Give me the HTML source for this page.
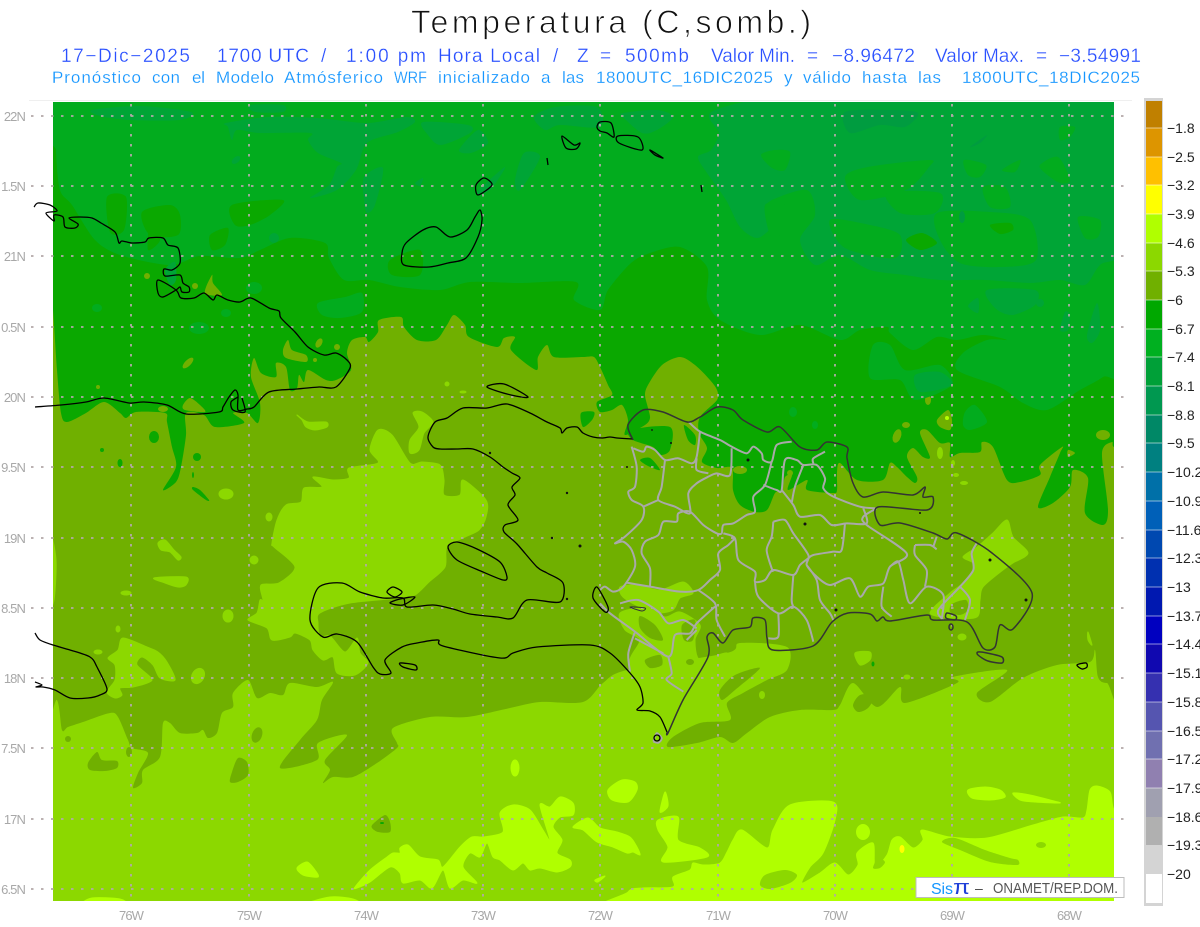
<!DOCTYPE html>
<html lang="es"><head><meta charset="utf-8"><title>Temperatura (C,somb.)</title>
<style>
html,body{margin:0;padding:0;background:#fff;width:1200px;height:927px;overflow:hidden}
svg{display:block;font-family:"Liberation Sans",sans-serif}
.l2{font-size:19px;fill:#2a50ff;stroke:#fff;stroke-width:.25}
.l3{font-size:17px;fill:#1596ff;stroke:#fff;stroke-width:.2}
.ax{font-size:13px;fill:#a8a8a8;letter-spacing:-.9px}
.lg{font-size:14px;fill:#222}
.c{fill:none;stroke:#000;stroke-width:1.3;stroke-linejoin:round}
.d{fill:none;stroke:#333;stroke-width:1.5;stroke-linejoin:round}
.g{fill:none;stroke:#a9a9a9;stroke-width:6;stroke-linejoin:round}
</style></head><body>
<svg width="1200" height="927" viewBox="0 0 1200 927" xmlns="http://www.w3.org/2000/svg">
<rect width="1200" height="927" fill="#fff"/>
<line x1="29" y1="100.5" x2="1132" y2="100.5" stroke="#efefef"/>
<!-- MAP -->
<clipPath id="m"><rect x="53" y="102" width="1061" height="799"/></clipPath>
<g clip-path="url(#m)">
<rect x="53" y="102" width="1061" height="799" fill="#8cd800"/>
<!-- yellow green -->
<g fill="#b0ff00" stroke="#b0ff00" stroke-linejoin="round">
<polygon points="297,868 307,862 315,870 318,877 303,875"/>
<polygon points="355,887 370,870 387,857 393,853 400,853 400,848 408,845 420,857 438,860 443,867 460,847 472,837 483,837 503,832 500,813 513,805 530,810 543,830 550,840 540,805 550,807 560,797 573,803 573,815 560,817 553,827 562,840 557,853 570,860 570,867 557,872 540,868 530,870 523,863 513,870 500,860 493,857 487,843 480,857 470,853 463,867 477,883 463,880 450,888 443,870 432,888 420,880 403,883 400,873 390,867 370,882 357,888"/>
<polygon points="573,827 588,818 600,828 617,832 630,837 637,847 640,855 633,852 627,853 613,847 597,842 583,830"/>
<polygon points="608,790 622,780 635,782 637,790 628,802 612,800"/>
<ellipse cx="515" cy="768" rx="4" ry="8"/>
<polygon points="658,820 678,817 678,840 700,848 707,857 663,862 668,847 658,830"/>
<polygon points="628,892 643,888 673,887 673,877 690,870 693,863 703,865 720,863 727,852 733,840 742,830 767,848 773,830 790,805 833,802 835,820 823,853 810,867 802,883 820,873 835,863 848,875 858,865 857,853 873,843 875,867 887,855 892,840 900,837 913,848 923,840 922,830 950,837 987,838 1033,825 1063,817 1083,818 1087,810 1090,790 1097,786 1110,792 1114,810 1130,830 1130,920 620,920"/>
<polygon points="968,790 985,787 1000,790 1005,797 990,800 972,798"/>
<polygon points="1013,793 1030,795 1050,800 1060,803 1035,802 1020,800"/>
<polygon points="83,905 92,898 120,899 125,905"/><polygon points="305,905 330,897 353,899 358,905"/>
<polygon points="595,880 605,876 598,882"/><polygon points="665,792 668,806 660,812"/>
</g>
<g fill="#8cd800">
<polygon points="942,842 955,838 985,850 1010,858 1018,860 1017,865 990,862 960,850"/>
<polygon points="760,885 765,875 785,870 797,875 790,883 770,889"/>
<ellipse cx="1041" cy="845" rx="5" ry="3"/>
<polygon points="878,858 885,862 880,868 873,868"/>
</g>
<ellipse cx="863" cy="832" rx="7" ry="8" fill="#b0ff00"/>
<ellipse cx="902" cy="849" rx="2.5" ry="4" fill="#ffff00"/>
<!-- olive main -->
<polygon fill="#70b000" points="40,90 1130,90 1130,678 1107,683 1098,677 1095,650 1090,662 1057,665 1023,678 990,702 977,693 1007,670 953,677 957,683 905,703 900,687 877,707 853,683 840,705 833,710 800,710 770,717 747,733 733,743 720,737 697,743 668,747 673,737 700,723 730,720 727,703 743,693 767,680 787,670 787,647 740,643 727,653 627,670 603,683 583,702 540,702 510,708 467,717 430,717 393,728 397,743 397,748 377,763 353,777 333,777 323,783 330,770 325,760 347,735 318,743 317,760 280,768 300,740 317,720 322,700 333,682 317,687 290,683 283,695 270,693 257,698 248,680 233,693 233,707 222,713 217,733 208,738 203,730 197,733 180,733 170,723 163,723 160,757 143,770 142,783 133,788 138,773 148,753 132,748 128,740 118,717 110,713 83,722 68,727 62,730 57,700 40,690"/>
<!-- light patches on olive -->
<g fill="#8cd800" stroke="#8cd800" stroke-linejoin="round">
<polygon points="272,543 277,520 286,505 301,502 304,488 322,487 313,477 333,480 349,478 349,468 378,463 370,450 378,430 392,435 410,463 422,462 440,465 444,480 444,495 460,495 463,480 486,500 486,517 479,530 465,537 447,547 445,567 429,582 415,595 400,598 350,603 320,613 318,623 320,637 330,636 345,652 357,638 360,653 368,663 355,675 337,673 333,657 323,660 313,650 310,640 295,633 290,637 272,640 267,628 248,620 257,613 260,600 263,600 261,585 279,583 295,567 274,547"/>
<polygon points="108,658 118,650 123,638 147,647 158,652 167,662 175,680 160,678 153,665 142,657 137,665 152,680 133,687 120,688 122,695 115,698 107,692 115,680 115,665"/>
<ellipse cx="198" cy="676" rx="6" ry="8" transform="rotate(30 198 676)"/><ellipse cx="228" cy="616" rx="5" ry="6"/><ellipse cx="118" cy="629" rx="2" ry="3"/><ellipse cx="98" cy="652" rx="4" ry="2"/>
<ellipse cx="226" cy="494" rx="7" ry="5"/><ellipse cx="269" cy="517" rx="3" ry="4"/><ellipse cx="254" cy="560" rx="4" ry="4"/>
<polygon points="158,543 165,540 174,550 181,557 178,560 170,552 161,550"/>
<polygon points="154,578 186,577 186,585 178,587 165,583"/><ellipse cx="126" cy="593" rx="5" ry="2"/>
<polygon points="297,415 308,422 326,422 327,427 315,430 306,427 302,420"/>
<polygon points="413,413 422,412 433,422 424,433 419,450 410,453 410,440 419,427"/>
<ellipse cx="447" cy="384" rx="2" ry="2"/><ellipse cx="463" cy="392" rx="3" ry="1"/>
<polygon points="1007,520 1013,537 1028,553 1013,563 1003,570 983,587 980,600 977,617 953,618 930,613 950,593 963,583 975,565 963,557 977,547 993,533"/>
<ellipse cx="962" cy="637" rx="4" ry="3"/><polygon points="855,653 870,652 870,660 860,665"/>
<polygon points="620,587 637,585 660,590 683,582 693,593 680,598 673,610 657,613 640,607 623,597"/>
<polygon points="620,613 645,608 665,617 680,612 700,625 695,640 700,660 727,653 727,670 640,680 630,660 640,640 625,630"/>
<ellipse cx="907" cy="677" rx="3" ry="2"/><polygon points="1088,632 1092,645 1088,640"/>
<polygon points="50,535 56,560 54,600 48,605"/>
</g>
<polygon fill="#70b000" points="640,616 655,625 663,640 650,638 640,628"/><polygon fill="#70b000" points="682,625 695,620 693,640 684,640"/>
<polygon fill="#70b000" points="645,660 660,655 662,665 650,668"/><ellipse cx="690" cy="662" rx="4" ry="3" fill="#70b000"/>
<polygon fill="#70b000" points="952,604 966,600 968,610 960,615 950,612"/><polygon fill="#70b000" points="700,645 712,640 716,650 704,656"/>
<ellipse cx="762" cy="695" rx="3" ry="4" fill="#8cd800"/>
<!-- olive pockets on light -->
<g fill="#70b000">
<polygon points="97,752 102,760 117,761 117,768 105,771 90,770 88,763"/>
<ellipse cx="129" cy="752" rx="3" ry="5"/><ellipse cx="68" cy="739" rx="3" ry="3"/>
<ellipse cx="257" cy="735" rx="5" ry="8" transform="rotate(20 257 735)"/>
<polygon points="238,758 247,762 248,775 238,782 230,782 232,772"/>
<polygon points="373,824 385,815 390,822 390,832 378,832 372,828"/>
<ellipse cx="384" cy="726" rx="3" ry="2"/>
<polygon points="853,705 860,695 875,695 868,708 858,712"/>
<polygon points="720,690 735,675 760,668 735,690 722,700"/>
</g>
<!-- dark green -->
<polygon fill="#0aa800" points="40,60 48,250 53,310 57,370 61,413 67,422 86,413 104,402 120,413 126,418 136,412 165,413 167,422 172,447 176,467 163,490 176,482 181,467 186,435 186,413 204,415 215,427 244,423 233,413 247,413 258,423 260,403 251,377 254,358 261,373 276,377 276,363 286,367 290,390 297,388 299,375 304,382 308,370 326,380 336,380 351,370 347,353 352,340 365,337 369,342 378,332 379,320 401,317 404,327 417,340 436,340 447,325 454,315 465,325 469,337 497,347 504,338 515,337 511,350 536,370 538,357 547,345 554,357 583,357 594,357 600,367 608,385 612,395 597,402 600,412 612,410 622,405 628,420 625,435 645,425 650,418 648,408 645,395 648,385 662,365 680,357 695,365 710,380 717,390 717,400 700,417 699,433 707,448 702,462 717,468 732,468 733,490 740,505 755,512 767,510 775,493 782,490 785,477 792,475 788,490 807,480 807,490 833,493 837,490 837,473 840,463 857,480 883,480 890,463 897,467 907,477 915,483 917,477 907,457 913,448 923,457 930,457 920,433 927,430 940,443 950,443 950,457 960,453 980,452 982,442 993,447 1007,480 1020,482 1040,475 1040,465 1062,447 1060,453 1050,477 1038,507 1053,503 1070,487 1073,470 1088,478 1085,513 1103,525 1108,510 1102,453 1112,442 1114,447 1130,447 1130,60"/>
<g fill="#0aa800">
<polygon points="630,430 670,427 670,450 660,455 653,447 633,440"/>
<polygon points="581,413 594,412 592,420 583,427"/>
<ellipse cx="154" cy="437" rx="5" ry="6"/><ellipse cx="102" cy="450" rx="2" ry="2"/><ellipse cx="120" cy="463" rx="2.5" ry="4"/><ellipse cx="197" cy="457" rx="4" ry="4"/><ellipse cx="193" cy="475" rx="1" ry="3"/>
<polygon points="193,487 200,490 209,500 206,500 193,490"/>
<polygon points="684,425 695,435 695,445 688,440"/><polygon points="640,460 650,458 660,470 648,466"/>
</g>
<ellipse cx="382" cy="823" rx="2" ry="1" fill="#0aa800"/><ellipse cx="873" cy="664" rx="1.5" ry="2.5" fill="#0aa800"/>
<!-- olive spots on green -->
<g fill="#70b000">
<ellipse cx="188" cy="363" rx="7" ry="3" transform="rotate(-45 188 363)"/><ellipse cx="98" cy="387" rx="2" ry="2"/>
<polygon points="283,350 288,340 292,350 306,355 306,362 286,358"/>
<ellipse cx="319" cy="343" rx="3" ry="5" transform="rotate(30 319 343)"/><ellipse cx="337" cy="347" rx="3" ry="3"/><ellipse cx="315" cy="360" rx="2" ry="2"/>
<polygon points="205,293 212,275 213,283 222,295"/>
<ellipse cx="147" cy="276" rx="3" ry="3"/><ellipse cx="245" cy="243" rx="3" ry="3"/><ellipse cx="137" cy="235" rx="2" ry="2"/><ellipse cx="195" cy="286" rx="3" ry="3"/>
<polygon points="183,405 190,398 200,405 205,412 185,410"/><ellipse cx="163" cy="409" rx="5" ry="3"/>
<ellipse cx="897" cy="436" rx="4" ry="7" transform="rotate(20 897 436)"/><ellipse cx="906" cy="425" rx="4" ry="3"/>
<polygon points="937,420 948,410 952,420 950,430 940,427"/><ellipse cx="928" cy="400" rx="3" ry="5"/>
<ellipse cx="1103" cy="435" rx="7" ry="5"/><polygon points="1068,450 1075,453 1068,457"/>
<ellipse cx="740" cy="470" rx="7" ry="4"/><ellipse cx="790" cy="473" rx="3" ry="3"/>
</g>
<ellipse cx="947" cy="418" rx="2" ry="2" fill="#b0ff00"/>
<g fill="#8cd800"><ellipse cx="940" cy="453" rx="3" ry="6"/><ellipse cx="953" cy="463" rx="2" ry="3"/><ellipse cx="956" cy="475" rx="3" ry="2"/><ellipse cx="964" cy="483" rx="4" ry="2"/></g>
<!-- mid green -->
<polygon fill="#02ac1e" points="56,80 56,150 60,190 72,205 95,240 120,255 170,265 200,256 240,258 260,250 290,238 325,243 329,258 344,280 369,280 400,287 440,290 470,282 520,283 576,282 574,300 600,310 608,290 631,263 650,253 680,247 707,267 707,300 720,320 760,335 800,325 840,340 860,330 887,327 890,333 913,350 937,337 957,340 983,335 1007,340 987,340 963,353 957,370 1000,387 1023,403 1047,410 1080,390 1103,377 1130,355 1130,80"/>
<g fill="#0aa800">
<polygon points="107,197 126,197 124,230 110,232"/>
<polygon points="142,212 170,205 180,215 178,235 150,235"/>
<polygon points="232,205 283,200 270,215 250,225 235,225"/>
<polygon points="210,235 228,228 225,245 212,250"/>
<polygon points="390,260 420,250 420,275 392,275"/>
<polygon points="150,225 160,240 148,250"/>
</g>
<g fill="#02ac1e">
<polygon points="318,303 345,297 362,293 362,312 340,318 322,315"/>
<ellipse cx="97" cy="308" rx="5" ry="4"/><ellipse cx="199" cy="328" rx="10" ry="6"/><ellipse cx="226" cy="313" rx="5" ry="4"/><ellipse cx="254" cy="288" rx="8" ry="6"/><ellipse cx="793" cy="412" rx="4" ry="5"/><ellipse cx="815" cy="425" rx="3" ry="4"/>
<polygon points="873,345 890,345 905,370 940,365 952,385 915,400 900,380 870,378"/>
<polygon points="963,425 965,412 975,405 987,422 970,430"/>
</g>
<!-- blue-green -->
<g fill="#00a536">
<polygon points="715,110 830,90 1130,80 1130,240 1100,265 1085,285 1060,280 1030,283 985,280 940,280 905,275 870,270 840,255 815,265 800,240 815,215 807,190 772,200 765,210 778,213 772,227 757,238 740,227 726,200 707,173 698,157 711,150 719,133"/>
<polygon points="92,110 140,106 191,112 180,120 130,120 100,116"/>
<polygon points="226,123 268,117 318,118 367,123 406,117 415,122 398,132 367,143 356,170 337,190 310,198 329,185 337,167 341,163 318,153 308,140 310,133 260,133 237,130 232,140 228,127"/>
<polygon points="423,122 468,125 470,133 441,145 428,135"/><polygon points="459,150 478,130 488,143 471,153"/>
<polygon points="534,117 555,107 597,107 600,127 560,125 545,130"/><polygon points="515,180 524,153 540,157 520,190"/>
<polygon points="364,177 383,168 375,205 367,213 364,200"/><polygon points="250,105 283,105 283,112 255,112"/>
<polygon points="476,193 505,167 490,190"/><polygon points="415,183 423,178 420,186"/>
<polygon points="623,113 657,110 673,117 657,130 642,133 623,117"/><ellipse cx="236" cy="160" rx="5" ry="3" transform="rotate(-40 236 160)"/>
<polygon points="987,290 1035,290 1035,305 1012,315 995,308"/><polygon points="968,306 978,298 978,313"/><polygon points="1060,330 1065,312 1070,315 1068,330"/>
<polygon points="1087,335 1097,303 1100,330 1092,343"/><polygon points="915,375 940,372 952,385 920,392"/>
<ellipse cx="1040" cy="303" rx="4" ry="4"/>
<polygon points="165,270 175,262 176,280 170,285"/><ellipse cx="274" cy="238" rx="5" ry="5"/>
</g>
<g fill="#02ac1e">
<polygon points="761,155 775,150 790,152 785,170 772,168"/>
<polygon points="845,177 868,167 929,160 929,167 906,190 860,200"/>
<polygon points="1060,127 1075,127 1070,137 1060,140"/>
<polygon points="964,160 986,165 980,177 968,175"/>
<polygon points="1002,170 1020,160 1015,172"/>
<polygon points="1040,165 1058,157 1070,180 1060,183 1045,173"/>
<polygon points="887,193 940,193 935,213 900,213"/>
<polygon points="937,213 990,212 1030,220 1036,260 1000,267 960,263 940,240"/>
<polygon points="983,187 1005,187 1010,207 990,207"/>
<polygon points="1078,217 1100,220 1098,237 1085,238"/>
<polygon points="765,205 785,205 780,235 770,235"/>
<polygon points="830,220 870,225 900,235 895,258 845,248"/>
</g>
<g fill="#0aa800"><polygon points="990,225 1010,223 1013,230 1000,234"/><polygon points="906,240 922,233 937,243 920,250"/></g>
<polygon points="845,112 890,110 918,113 905,127 880,125 850,133" fill="#009c40"/>
<polygon points="970,147 987,135 980,143" fill="#009c40"/><ellipse cx="962" cy="217" rx="3" ry="6" fill="#009c40"/>
</g>
<!-- grid -->
<g stroke="#b2a8a8" stroke-width="1.8" stroke-dasharray="2.5 7.5" fill="none">
<path d="M31 116H1130M31 186H1130M31 256H1130M31 327H1130M31 397H1130M31 467H1130M31 538H1130M31 608H1130M31 678H1130M31 748H1130M31 819H1130M31 889H1130"/>
<path d="M131 104V899M249 104V899M366 104V899M483 104V899M600 104V899M718 104V899M835 104V899M952 104V899M1069 104V899"/>
</g>
<!-- DR gray provinces (crop coords) -->
<g transform="translate(600 390) scale(.33333)">
<path class="g" d="M95 170L110 230L105 290L85 305L95 330L130 350L125 390L75 440L45 460L70 455L95 480L105 530L70 590L40 605L15 590L0 600
M100 175L130 185L140 170L165 180L195 210L235 205L275 220L290 200L300 125
M265 95L300 125L360 150L395 170L440 190L460 170L485 190L490 210L515 215L530 165L575 155
M195 210L185 290L175 330L225 350L270 370L265 310L290 280L325 260L350 250L390 255L395 175
M290 205L290 240L325 250
M515 215L495 285L460 320L465 365L440 375L400 400L370 405L365 430L350 430L310 405L270 365L235 370L230 395L190 395L175 435L135 455L125 490L150 535L150 590
M130 350L175 330
M490 285L530 300L545 300L555 210L590 210L610 225L650 225L675 265L670 295L700 320L780 350L830 355
M545 300L580 345L600 380L660 375L695 405L740 400L800 400L790 355
M610 225L585 290L575 340M640 220L640 205L675 185
M370 430L405 445L415 510L465 545L465 575L495 570L520 540L580 555L600 525L625 505L640 495L700 485L725 480L735 400
M520 395L555 390L580 430L625 495L620 525L650 560L690 585L750 565L780 620L805 590L850 580L870 530L920 490L800 405L790 380L830 355
M520 395L515 440L500 480L515 535L520 545
M405 445L385 465L355 490L360 540L330 570L295 600L240 605L150 590L80 578
M465 575L475 620L535 670L580 650L620 690L640 755
M580 555L575 630L580 650M535 670L535 740L505 745
M620 525L650 570L660 630L690 670L700 690
M850 590L845 650L875 680M870 530L895 515L910 570L930 640L980 590L1030 615L1025 690
M945 465L990 465L1010 478M945 465L945 495L980 540L975 590M1010 440L1000 470
M1130 460L1115 490L1120 540L1080 590L1015 660L1030 690M1080 590L1110 630L1095 690
M295 600L345 640L350 690L375 740M345 650L290 700L270 730L225 735L205 800L105 725L30 670L0 640
M290 720L260 750M60 640L115 630L175 665L205 700L250 690L290 715
M105 725L85 790L90 845M205 800L215 850L200 870L250 905M105 745L190 790
M160 1055L170 1030L185 1045L175 1058L160 1055"/>
</g>
<!-- coasts -->
<polyline class="c" points="34,207 38,203 50,205 57,211 46,213 54,221 54,215 63,217 65,227 75,228 78,224 69,218 80,217 92,218 101,223 115,232 119,243 122,241 132,243 145,242 149,238 163,238 168,245 178,248 180,263 172,270 164,269 165,276 180,275 183,283 189,287 189,292 182,292 180,287 176,290 163,297 158,293 158,280 176,290 181,298 194,298 204,293 213,300 217,295 228,300 240,302 251,298 269,308 279,311 281,318 295,332 308,347 324,355 336,353 347,360 350,368 336,387 319,387 297,389 269,392 254,407 247,409 238,410 238,395 235,390 229,397 223,407 219,412 186,414 167,405 144,402 129,403 104,398 86,402 61,405 35,407"/>
<polyline class="c" points="238,397 231,402 233,410 245,412 242,398"/>
<polygon class="c" points="402,253 406,243 423,230 436,227 450,237 467,230 475,217 480,210 482,220 478,237 466,258 448,263 429,267 404,265"/>
<polygon class="c" points="476,185 484,178 492,185 478,195"/>
<polygon class="c" points="562,136 574,145 580,143 576,149 566,148"/>
<path class="c" d="M547 158L548 165M701 185L702 192"/>
<polygon class="c" points="597,127 600,122 611,123 614,137 607,133 600,131"/>
<polygon class="c" points="618,136 638,137 642,150 619,143"/>
<polygon class="c" points="650,150 663,158 655,155"/>
<polyline class="c" points="633,439 617,438 610,437 602,438 593,437 583,433 577,427 567,428 562,433 560,428 547,422 530,413 507,404 487,408 463,408 447,418 435,422 428,437 433,447 440,449 457,449 473,449 490,457 503,467 512,473 520,478 512,487 515,495 508,505 518,520 505,525 504,532 517,544 537,567 547,573 563,583 560,602 527,600 513,618 497,617 470,614 453,609 433,605 407,607 403,598 383,598 360,592 342,583 318,588 310,620 323,637 337,634 357,642 373,667 380,674 391,673 385,660 402,647 417,643 438,640 443,646 500,658 513,653 537,647 590,645 610,653 630,673 640,687 643,703 637,710 650,711 660,717 667,732"/>
<polyline class="d" points="667,732 668,733 683,700 708,657 707,637 713,633 723,643 733,630 750,627 753,618 765,620 767,638 773,650 813,646 832,622 848,613 870,614 877,621 883,617 890,621 927,615 933,620 967,622 983,648 995,647 1000,625 1013,629 1032,593 992,553 957,533 947,539 933,533 900,523 880,525 878,507 927,510 933,497 923,497 925,487 913,495 883,492 863,497 853,483 847,458 847,447 827,442 817,450 800,447 780,427 767,432 743,420 733,410 717,407 700,417 687,422 663,412 643,410 628,425 633,440"/>
<polygon class="c" points="448,547 457,542 477,549 500,562 507,577 503,580 483,572 457,560"/>
<polygon class="c" points="487,387 504,384 528,397 511,395"/>
<polygon class="c" points="387,592 393,587 402,592 395,597"/>
<polygon class="c" points="403,605 415,597 400,599 390,603"/>
<polygon class="c" points="400,663 415,665 416,670 403,667"/>
<polyline class="c" points="35,633 40,640 53,645 70,650 90,657 97,667 107,689 100,695 88,698 70,698 55,690 43,687 36,687 42,685 35,682"/>
<polygon class="d" points="978,652 987,653 1002,657 1002,663 988,661 978,655"/>
<polygon class="c" points="1077,665 1086,663 1087,667 1082,669"/>
<polygon class="d" points="947,613 956,616 955,620 946,618"/><ellipse class="d" cx="951" cy="627" rx="2" ry="3"/>
<polygon class="c" points="597,587 593,598 605,612 608,607"/>
<polygon class="d" style="stroke-width:1" points="630,607 645,608 642,611"/>
<circle cx="657" cy="738" r="3" class="c"/>
<g fill="#111">
<circle cx="490" cy="453" r="1.2"/><circle cx="567" cy="493" r="1.2"/><circle cx="552" cy="538" r="1.2"/><circle cx="580" cy="546" r="1.5"/><circle cx="567" cy="599" r="1.2"/><circle cx="627" cy="467" r="1"/><circle cx="652" cy="430" r=".9"/><circle cx="671" cy="443" r="1"/><circle cx="748" cy="460" r="1.5"/><circle cx="805" cy="524" r="1.5"/><circle cx="990" cy="560" r="1.5"/><circle cx="1026" cy="600" r="1.5"/><circle cx="836" cy="610" r="1.5"/><circle cx="920" cy="513" r="1"/>
</g>
<!-- titles -->
<text x="411" y="33" font-size="32" textLength="400" fill="#111" stroke="#fff" stroke-width=".85">Temperatura (C,somb.)</text>
<g class="l2">
<text x="61" y="62" textLength="129">17−Dic−2025</text><text x="217" y="62" textLength="92">1700 UTC</text><text x="321" y="62" textLength="12">/</text><text x="346" y="62" textLength="80">1:00 pm</text><text x="438" y="62" textLength="102">Hora Local</text><text x="553" y="62" textLength="12">/</text><text x="577" y="62" textLength="10">Z</text><text x="600" y="62" textLength="12">=</text><text x="625" y="62" textLength="64">500mb</text><text x="711" y="62" textLength="84">Valor Min.</text><text x="807" y="62" textLength="12">=</text><text x="832" y="62" textLength="83">−8.96472</text><text x="935" y="62" textLength="89">Valor Max.</text><text x="1036" y="62" textLength="12">=</text><text x="1059" y="62" textLength="82">−3.54991</text>
</g>
<g class="l3">
<text x="52" y="83" textLength="89">Pronóstico</text><text x="152" y="83" textLength="28">con</text><text x="192" y="83" textLength="13">el</text><text x="216" y="83" textLength="58">Modelo</text><text x="284" y="83" textLength="99">Atmósferico</text><text x="394" y="83" textLength="33" lengthAdjust="spacingAndGlyphs">WRF</text><text x="438" y="83" textLength="92">inicializado</text><text x="541" y="83" textLength="9">a</text><text x="562" y="83" textLength="22">las</text><text x="596" y="83" textLength="177">1800UTC_16DIC2025</text><text x="784" y="83" textLength="8">y</text><text x="803" y="83" textLength="48">válido</text><text x="862" y="83" textLength="45">hasta</text><text x="918" y="83" textLength="23">las</text><text x="962" y="83" textLength="178">1800UTC_18DIC2025</text>
</g>
<!-- axis -->
<g class="ax" text-anchor="end">
<text x="25" y="121">22N</text><text x="25" y="191">1.5N</text><text x="25" y="261">21N</text><text x="25" y="332">0.5N</text><text x="25" y="402">20N</text><text x="25" y="472">9.5N</text><text x="25" y="543">19N</text><text x="25" y="613">8.5N</text><text x="25" y="683">18N</text><text x="25" y="753">7.5N</text><text x="25" y="824">17N</text><text x="25" y="894">6.5N</text>
</g>
<g class="ax" text-anchor="middle">
<text x="131" y="920">76W</text><text x="249" y="920">75W</text><text x="366" y="920">74W</text><text x="483" y="920">73W</text><text x="600" y="920">72W</text><text x="718" y="920">71W</text><text x="835" y="920">70W</text><text x="952" y="920">69W</text><text x="1069" y="920">68W</text>
</g>
<!-- logo box -->
<rect x="916" y="877.5" width="208" height="20" fill="#fff" stroke="#bdbdbd"/>
<text x="931" y="894" font-size="16" textLength="22" fill="#1596ff">Sis</text>
<text x="953" y="894" font-size="20" textLength="17" lengthAdjust="spacingAndGlyphs" fill="#1f3fd8">π</text>
<text x="975" y="893" font-size="14" fill="#444">–</text>
<text x="993" y="893" font-size="14.5" textLength="125" lengthAdjust="spacingAndGlyphs" fill="#555">ONAMET/REP.DOM.</text>
<!-- legend -->
<rect x="1144" y="98" width="19" height="808" fill="#d4d4d4"/>
<g>
<rect x="1146" y="101" width="16" height="27" fill="#c08000"/>
<rect x="1146" y="128" width="16" height="29" fill="#dd9500"/>
<rect x="1146" y="157" width="16" height="28" fill="#ffc000"/>
<rect x="1146" y="185" width="16" height="29" fill="#ffff00"/>
<rect x="1146" y="214" width="16" height="29" fill="#b0ff00"/>
<rect x="1146" y="243" width="16" height="28" fill="#8cd800"/>
<rect x="1146" y="271" width="16" height="29" fill="#70b000"/>
<rect x="1146" y="300" width="16" height="29" fill="#00a800"/>
<rect x="1146" y="329" width="16" height="28" fill="#00b020"/>
<rect x="1146" y="357" width="16" height="29" fill="#00a038"/>
<rect x="1146" y="386" width="16" height="29" fill="#009850"/>
<rect x="1146" y="415" width="16" height="28" fill="#008866"/>
<rect x="1146" y="443" width="16" height="29" fill="#008080"/>
<rect x="1146" y="472" width="16" height="29" fill="#0070a8"/>
<rect x="1146" y="501" width="16" height="29" fill="#0060b8"/>
<rect x="1146" y="530" width="16" height="28" fill="#0048b0"/>
<rect x="1146" y="558" width="16" height="29" fill="#0030b0"/>
<rect x="1146" y="587" width="16" height="29" fill="#0018b0"/>
<rect x="1146" y="616" width="16" height="28" fill="#0000c0"/>
<rect x="1146" y="644" width="16" height="29" fill="#1008b0"/>
<rect x="1146" y="673" width="16" height="29" fill="#3530b0"/>
<rect x="1146" y="702" width="16" height="29" fill="#5555b0"/>
<rect x="1146" y="731" width="16" height="28" fill="#7070b0"/>
<rect x="1146" y="759" width="16" height="29" fill="#9080b0"/>
<rect x="1146" y="788" width="16" height="29" fill="#a0a0b0"/>
<rect x="1146" y="817" width="16" height="28" fill="#b0b0b0"/>
<rect x="1146" y="845" width="16" height="29" fill="#d4d4d4"/>
<rect x="1146" y="874" width="16" height="29" fill="#ffffff"/>
</g>
<path d="M1146 128h16M1146 157h16M1146 185h16M1146 214h16M1146 243h16M1146 271h16M1146 300h16M1146 329h16M1146 357h16M1146 386h16M1146 415h16M1146 443h16M1146 472h16M1146 501h16M1146 530h16M1146 558h16M1146 587h16M1146 616h16M1146 644h16M1146 673h16M1146 702h16M1146 731h16M1146 759h16M1146 788h16" stroke="#fff" stroke-opacity=".55" stroke-width="1" fill="none"/>
<g class="lg">
<text x="1167" y="133">−1.8</text><text x="1167" y="162">−2.5</text><text x="1167" y="190">−3.2</text><text x="1167" y="219">−3.9</text><text x="1167" y="248">−4.6</text><text x="1167" y="276">−5.3</text><text x="1167" y="305">−6</text><text x="1167" y="334">−6.7</text><text x="1167" y="362">−7.4</text><text x="1167" y="391">−8.1</text><text x="1167" y="420">−8.8</text><text x="1167" y="448">−9.5</text><text x="1167" y="477">−10.2</text><text x="1167" y="506">−10.9</text><text x="1167" y="535">−11.6</text><text x="1167" y="563">−12.3</text><text x="1167" y="592">−13</text><text x="1167" y="621">−13.7</text><text x="1167" y="649">−14.4</text><text x="1167" y="678">−15.1</text><text x="1167" y="707">−15.8</text><text x="1167" y="736">−16.5</text><text x="1167" y="764">−17.2</text><text x="1167" y="793">−17.9</text><text x="1167" y="822">−18.6</text><text x="1167" y="850">−19.3</text><text x="1167" y="879">−20</text>
</g>
</svg>
<script>
(function(){
var NS="http://www.w3.org/2000/svg";
function seg(p,closed){
 var n=p.length,d="M"+p[0][0]+" "+p[0][1],m=closed?n:n-1;
 for(var i=0;i<m;i++){
  var a=closed?p[(i-1+n)%n]:p[Math.max(i-1,0)],b=p[i],c=p[(i+1)%n],e=closed?p[(i+2)%n]:p[Math.min(i+2,n-1)];
  d+="C"+(b[0]+(c[0]-a[0])/7).toFixed(1)+" "+(b[1]+(c[1]-a[1])/7).toFixed(1)+" "+(c[0]-(e[0]-b[0])/7).toFixed(1)+" "+(c[1]-(e[1]-b[1])/7).toFixed(1)+" "+c[0]+" "+c[1];
 }
 return d+(closed?"Z":"");
}
var els=document.querySelectorAll("polygon,polyline");
for(var i=0;i<els.length;i++){
 var el=els[i],closed=el.tagName==="polygon";
 var pts=el.getAttribute("points").trim().split(/\s+/).map(function(s){return s.split(",").map(Number)});
 var path=document.createElementNS(NS,"path");
 for(var j=0;j<el.attributes.length;j++){var at=el.attributes[j];if(at.name!=="points")path.setAttribute(at.name,at.value)}
 path.setAttribute("d",seg(pts,closed));
 el.parentNode.replaceChild(path,el);
}
var g=document.querySelector("path.g");
if(g){
 var subs=g.getAttribute("d").split("M").filter(function(s){return s.trim()}),out="";
 subs.forEach(function(s){out+=seg(s.trim().split("L").map(function(q){return q.trim().split(/\s+/).map(Number)}),false)});
 g.setAttribute("d",out);
}
})();
</script>
</body></html>
